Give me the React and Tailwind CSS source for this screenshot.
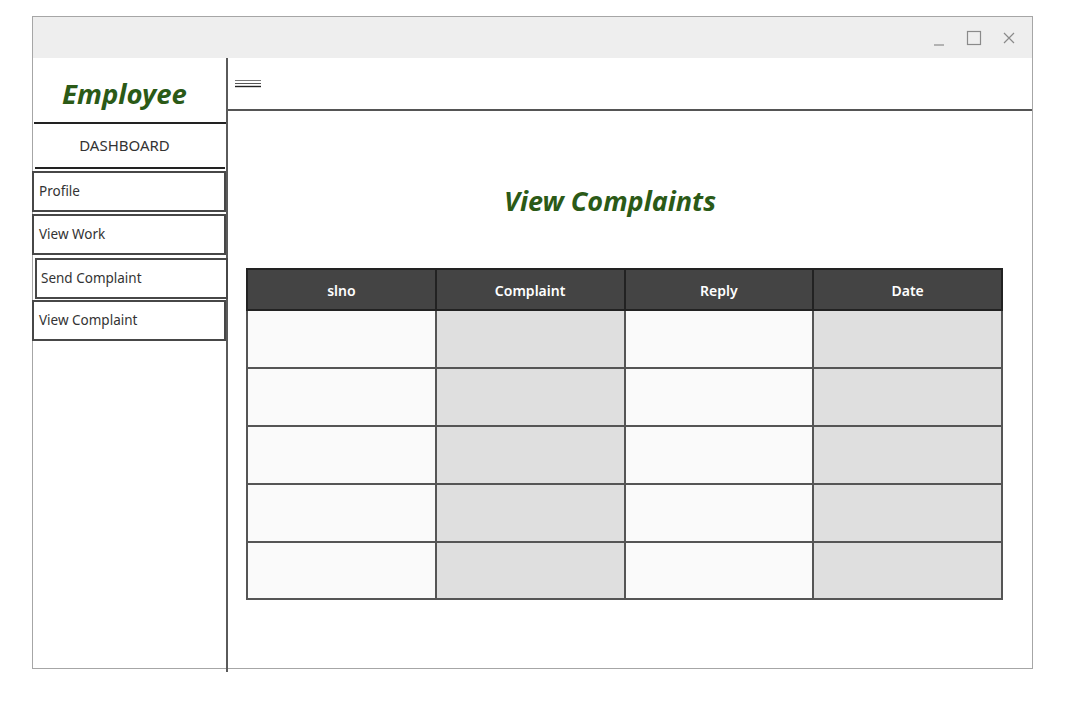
import React from "react";

const navItems = [
  { label: "Profile", shift: false },
  { label: "View Work", shift: false },
  { label: "Send Complaint", shift: true },
  { label: "View Complaint", shift: false },
];

const columns = ["slno", "Complaint", "Reply", "Date"];

export default function App() {
  const rows = [0, 1, 2, 3, 4];

  return (
    <div className="min-h-[711px] w-[1069px] bg-white pt-4 pl-8" style={{ fontFamily: '"Noto Sans", "Open Sans", sans-serif' }}>
      <div className="w-[1001px] h-[653px] border border-[#a6a6a6] flex flex-col">
        {/* Title bar */}
        <div className="h-[41px] bg-[#eeeeee] flex items-center justify-end pr-[16px] gap-[20px] text-[#8a8a8a]">
          <svg width="14" height="14" viewBox="0 0 14 14" className="mt-[6px]">
            <line x1="2" y1="11" x2="12" y2="11" stroke="#8a8a8a" strokeWidth="1.2" />
          </svg>
          <svg width="16" height="16" viewBox="0 0 16 16">
            <rect x="1.5" y="1.5" width="13" height="13" fill="none" stroke="#8a8a8a" strokeWidth="1.2" />
          </svg>
          <svg width="14" height="14" viewBox="0 0 14 14">
            <path d="M2 2 L12 12 M12 2 L2 12" stroke="#8a8a8a" strokeWidth="1.2" />
          </svg>
        </div>

        <div className="flex flex-1">
          {/* Sidebar */}
          <aside className="w-[195px] border-r-2 border-[#5a5a5a] -mb-[4px] flex flex-col">
            <div className="h-[64px] flex items-center justify-center pr-[10px] pt-[8px]">
              <span className="text-[27.5px] font-bold italic text-[#2b5a17]">Employee</span>
            </div>
            <div className="h-[2px] bg-[#222] ml-[1px]" />
            <div className="h-[43px] flex items-center justify-center pr-[10px] text-[15px] text-[#333]">DASHBOARD</div>
            <div className="h-[2px] bg-[#222] ml-[2px] mr-[1px]" />
            <div className="flex flex-col mt-[2px]">
              {navItems.map((item, i) => (
                <div
                  key={item.label}
                  className={`h-[41px] border-2 border-[#474747] flex items-center text-[13.5px] text-[#333] ${
                    item.shift ? "ml-[2px] -mr-[2px] pl-[4px] mt-[3px]" : "-ml-px pl-[5px]"
                  } ${i === 1 ? "mt-[2px]" : ""} ${i === 3 ? "mt-[1px]" : ""}`}
                >
                  {item.label}
                </div>
              ))}
            </div>
          </aside>

          {/* Main */}
          <main className="flex-1 flex flex-col">
            <div className="h-[53px] border-b-2 border-[#555] flex items-center pl-[6px]">
              <svg width="28" height="10" viewBox="0 0 28 10" className="mt-[1px]">
                <line x1="1" y1="1.5" x2="27" y2="1.5" stroke="#777" strokeWidth="1" />
                <line x1="1" y1="4.5" x2="27" y2="4.5" stroke="#555" strokeWidth="1" />
                <line x1="1" y1="7.5" x2="27" y2="7.5" stroke="#222" strokeWidth="1.4" />
              </svg>
            </div>

            <div className="pl-[18px] pt-[72px]">
              <h1 className="w-[756px] text-center pr-[28px] text-[27px] leading-[36px] font-bold italic text-[#2b5a17]">
                View Complaints
              </h1>

              <table className="mt-[49px] border-collapse border-2 border-[#111] table-fixed w-[757px]">
                <thead>
                  <tr className="h-[41px] bg-[#444444]">
                    {columns.map((c) => (
                      <th key={c} className="border-2 border-[#222] text-white text-[14px] font-semibold pt-[2px]">
                        {c}
                      </th>
                    ))}
                  </tr>
                </thead>
                <tbody>
                  {rows.map((r) => (
                    <tr key={r} className={r === 4 ? "h-[57px]" : "h-[58px]"}>
                      {columns.map((c, ci) => (
                        <td
                          key={c}
                          className={`border-2 border-[#555] ${ci % 2 === 0 ? "bg-[#fafafa]" : "bg-[#dfdfdf]"}`}
                        />
                      ))}
                    </tr>
                  ))}
                </tbody>
              </table>
            </div>
          </main>
        </div>
      </div>
    </div>
  );
}
